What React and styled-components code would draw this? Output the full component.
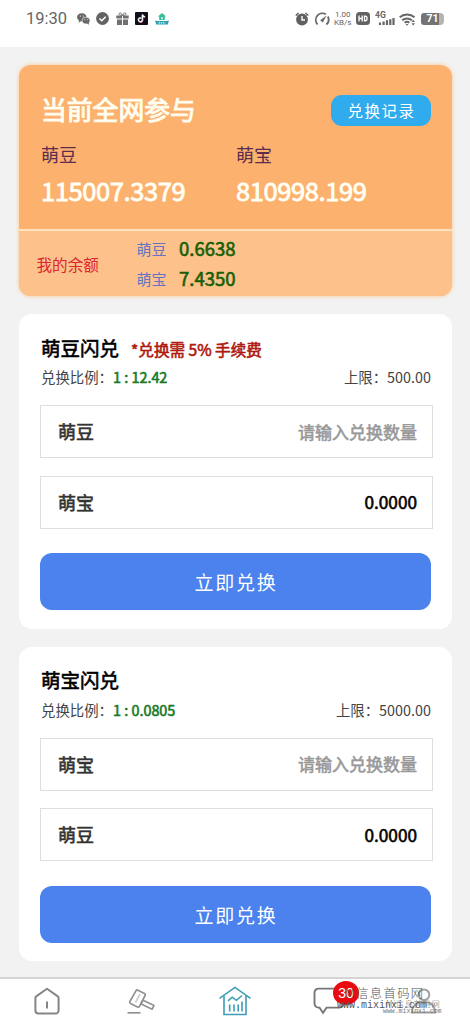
import React from 'react';
import styled, { createGlobalStyle, css } from 'styled-components';

// Content declarations:
const totals = [
  { id: 0, name: '萌豆', value: '115007.3379' },
  { id: 1, name: '萌宝', value: '810998.199' },
];

const balances = [
  { id: 0, name: '萌豆', value: '0.6638' },
  { id: 1, name: '萌宝', value: '7.4350' },
];

const exchanges = [
  {
    id: 0,
    title: '萌豆闪兑',
    note: '*兑换需 5% 手续费',
    ratio: '1 : 12.42',
    limit: '500.00',
    from: '萌豆',
    to: '萌宝',
  },
  {
    id: 1,
    title: '萌宝闪兑',
    note: '',
    ratio: '1 : 0.0805',
    limit: '5000.00',
    from: '萌宝',
    to: '萌豆',
  },
];

const GlobalStyle = createGlobalStyle`
  * {
    box-sizing: border-box;
  }
  body {
    margin: 0;
    background: #f2f2f2;
    font-family: 'Noto Sans CJK SC', sans-serif;
  }
`;

// Thickens the regular weight without changing its widths
const semiBold = css`
  -webkit-text-stroke: ${props => props.$stroke || 0.6}px currentColor;
`;

const Page = styled.div`
  width: 470px;
  height: 1024px;
  display: flex;
  flex-direction: column;
  overflow: hidden;
  background: #f2f2f2;
`;

const StatusBar = styled.header`
  flex: none;
  height: 47px;
  padding: 0 26px 10px;
  display: flex;
  align-items: center;
  justify-content: space-between;
  background: #fff;
  color: #666;
`;

const StatusGroup = styled.div`
  display: flex;
  align-items: center;
  gap: ${props => props.$gap}px;

  svg {
    display: block;
  }
`;

const Clock = styled.span`
  width: 44px;
  font: 16.5px/20px Roboto, sans-serif;
  white-space: nowrap;
`;

const Speed = styled.span`
  display: flex;
  flex-direction: column;
  align-items: center;
  font: 8px/8px Roboto, sans-serif;
  width: 17px;
  white-space: nowrap;
`;

const Battery = styled.span`
  width: 23px;
  height: 12px;
  border-radius: 3px 4px 4px 3px;
  background: linear-gradient(90deg, #747474 78%, #b4b4b4 78%);
  color: #fff;
  font: bold 10.5px/12.5px Roboto, sans-serif;
  text-align: center;
`;

const Content = styled.main`
  flex: 1;
  min-height: 0;
  padding: 18px 18px 0 19px;
  display: flex;
  flex-direction: column;
  gap: 18px;
`;

const Summary = styled.section`
  flex: none;
  height: 231px;
  border-radius: 12px;
  overflow: hidden;
  background: #fcb16e;
  box-shadow: 0 0 4px #fbc58c;
  display: flex;
  flex-direction: column;
`;

const SummaryTop = styled.div`
  height: 164px;
  padding: 29px 21px 0 22px;
`;

const SummaryHead = styled.div`
  height: 32px;
  display: flex;
  justify-content: space-between;
`;

const SummaryTitle = styled.h1`
  ${semiBold}
  margin: 0;
  font-size: 25.8px;
  line-height: 29px;
  font-weight: 400;
  color: #fffef0;
`;

const RecordButton = styled.button`
  width: 100px;
  height: 31px;
  margin-top: 1px;
  border: 0;
  padding: 0 0 0 1px;
  border-radius: 11px;
  background: #30abed;
  color: #fff;
  font: 15.5px/31px 'Noto Sans CJK SC', sans-serif;
  letter-spacing: 1.5px;
`;

const Totals = styled.div`
  display: flex;
`;

const Total = styled.div`
  width: 195px;
`;

const TotalName = styled.div`
  margin-top: 16px;
  font-size: 18px;
  line-height: 24px;
  color: #5b2c50;
`;

const TotalValue = styled.div`
  ${semiBold}
  margin-top: 6px;
  font-size: 25.5px;
  line-height: 36px;
  letter-spacing: -0.4px;
  color: #fffff5;
`;

const SummaryBottom = styled.div`
  flex: 1;
  padding: 0 0 1px 17.5px;
  border-top: 2px solid #fde3bd;
  background: #fdc28b;
  display: flex;
  align-items: center;
`;

const BalanceLabel = styled.div`
  width: 100px;
  padding-top: 1px;
  font-size: 15.6px;
  color: #dc2530;
`;

const BalanceList = styled.div`
  display: flex;
  flex-direction: column;
`;

const BalanceRow = styled.div`
  height: 30px;
  display: flex;
  align-items: center;
`;

const BalanceName = styled.span`
  width: 42.5px;
  padding-top: 1px;
  font-size: 15px;
  color: #6374c3;
`;

const BalanceValue = styled.span`
  ${semiBold}
  padding-bottom: 1px;
  font-size: 18.5px;
  color: #175f05;
`;

const Panel = styled.section`
  flex: none;
  height: 314.5px;
  padding: 19.5px 21px 0 22px;
  border-radius: 13px;
  background: #fff;
  display: flex;
  flex-direction: column;
`;

const PanelHead = styled.div`
  height: 28px;
  display: flex;
  align-items: center;
`;

const PanelTitle = styled.h2`
  ${semiBold}
  margin: 0;
  width: 90px;
  font-size: 19.5px;
  line-height: 28px;
  font-weight: 400;
  color: #000;
`;

const PanelNote = styled.span`
  ${semiBold}
  padding-top: 2px;
  font-size: 15.6px;
  line-height: 24px;
  color: #b01a10;
`;

const PanelMeta = styled.div`
  height: 30px;
  display: flex;
  align-items: center;
  justify-content: space-between;
  font-size: 14.4px;
  color: #444;
`;

const Ratio = styled.span`
  ${semiBold}
  color: #197a25;
`;

const Field = styled.div`
  width: 393px;
  height: 53px;
  margin: ${props => (props.$spaced ? 17.5 : 13.5)}px 0 0 -1px;
  padding: 0 15px 1px 17px;
  border: 1px solid #dedede;
  display: flex;
  align-items: center;
  justify-content: space-between;
`;

const FieldName = styled.span`
  ${semiBold}
  font-size: 18px;
  color: #333;
`;

const FieldHint = styled.span`
  ${semiBold}
  font-size: 17px;
  color: #999;
`;

const FieldValue = styled.span`
  ${semiBold}
  font-size: 17.2px;
  color: #000;
`;

const SubmitButton = styled.button`
  width: 391px;
  height: 57px;
  margin: 24.5px 0 0 -1px;
  padding: 0 0 0 1px;
  border: 0;
  border-radius: 12px;
  background: #4b82ed;
  color: #fff;
  font: 19px/58px 'Noto Sans CJK SC', sans-serif;
  letter-spacing: 1.7px;
`;

const TabBar = styled.nav`
  position: relative;
  flex: none;
  height: 47px;
  border-top: 2px solid #d4d4d4;
  background: #fff;
  display: flex;
  overflow: hidden;
`;

const Tab = styled.div`
  flex: 1;
  padding-top: 7px;
  display: flex;
  flex-direction: column;
  align-items: center;
  font-size: 12.5px;
  line-height: 18px;
  color: ${props => (props.$active ? '#3c9fb5' : '#777')};

  svg {
    flex: none;
    display: block;
    margin-bottom: 5px;
  }
`;

const Badge = styled.span`
  position: absolute;
  left: 333px;
  top: 2px;
  width: 26px;
  height: 24px;
  border-radius: 50%;
  background: #e90b12;
  color: #fff;
  font: 14px/24px 'Liberation Sans', sans-serif;
  text-align: center;
`;

const Stamp = styled.div`
  position: absolute;
  left: ${props => props.$left}px;
  top: ${props => props.$top}px;
  font: ${props => props.$size}px/1 ${props => (props.$mono ? "'Liberation Mono', monospace" : "'Noto Sans CJK SC', sans-serif")};
  font-weight: ${props => (props.$mono ? 400 : 300)};
  letter-spacing: ${props => props.$spacing || 0}px;
  color: ${props => props.$color || '#555'};
  white-space: nowrap;
`;

// Status bar icons
const WechatIcon = () => (
  <svg width="13" height="12" viewBox="0 0 13 12">
    <ellipse cx="4.8" cy="4.2" rx="4.7" ry="4" fill="#666" />
    <path d="M2 7 1.6 9.5 4.5 8z" fill="#666" />
    <ellipse cx="9" cy="7.6" rx="4" ry="3.4" fill="#666" stroke="#fff" strokeWidth=".6" />
    <path d="M10 10.4l2 1.4-.3-2.5z" fill="#666" />
    <g fill="#fff">
      <circle cx="3.3" cy="3.1" r=".6" />
      <circle cx="6.2" cy="3.1" r=".6" />
      <circle cx="7.8" cy="6.8" r=".5" />
      <circle cx="10.3" cy="6.8" r=".5" />
    </g>
  </svg>
);

const CheckIcon = () => (
  <svg width="13" height="13" viewBox="0 0 13 13">
    <circle cx="6.5" cy="6.5" r="6.4" fill="#636363" />
    <path d="M3.5 6.5l2.3 2.3 3.9-4" fill="none" stroke="#fff" strokeWidth="1.5" />
  </svg>
);

const GiftIcon = () => (
  <svg width="13" height="13" viewBox="0 0 13 13">
    <path d="M.3 3.5h5.7v3H.3zM7 3.5h5.7v3H7zM1 7.5h5V13H1zM7 7.5h5V13H7z" fill="#707070" />
    <path d="M6.5 3.4C5.4.2 2.5.3 3.2 2.5c.2.6 1.3.9 3.3.9C8.5 3.4 9.6 3.1 9.8 2.5 10.5.3 7.6.2 6.5 3.4z" fill="none" stroke="#707070" />
  </svg>
);

const TiktokIcon = () => (
  <svg width="13" height="13" viewBox="0 0 13 13">
    <rect width="13" height="13" rx="1" fill="#130d18" />
    <path d="M6.4 6.1a2 2 0 1 0 1.1 1.9V2.6c.3 1.4 1.2 2.2 2.6 2.3" fill="none" stroke="#e04963" strokeWidth="1.3" transform="translate(.4 .3)" />
    <path d="M6.2 6a2 2 0 1 0 1.1 1.9V2.5c.3 1.4 1.2 2.2 2.6 2.3" fill="none" stroke="#e8ffff" strokeWidth="1.3" />
  </svg>
);

const HouseIcon = () => (
  <svg width="14" height="13" viewBox="0 0 14 13">
    <path d="M7 1l4.1 3.6H9.8V8H4.2V4.6H2.9z" fill="#35bd9b" />
    <path d="M6.2 5h1.6v2.5H6.2z" fill="#c5f2e6" />
    <path d="M0 8.4l2.5.6h9l2.5-.6-1.3 4.1H1.3z" fill="#2b9fb0" />
    <path d="M3.5 10.8h7" stroke="#d8f5f3" strokeWidth="1.2" strokeDasharray="1.5 .7" />
  </svg>
);

const AlarmIcon = () => (
  <svg width="14" height="14" viewBox="0 0 14 14">
    <circle cx="7" cy="7.5" r="5.9" fill="#606060" />
    <path d="M.7 3.6L3.6 1M13.3 3.6L10.4 1" stroke="#606060" strokeWidth="1.4" />
    <path d="M7 4v4h3" fill="none" stroke="#fff" strokeWidth="1.4" />
  </svg>
);

const GaugeIcon = () => (
  <svg width="16" height="14" viewBox="0 0 16 14">
    <path d="M3.6 12.5A6.6 6.6 0 0 1 11.8 2.3M13.8 4.5a6.6 6.6 0 0 1-1.4 8" fill="none" stroke="#666" strokeWidth="1.8" />
    <path d="M12.5 3.5L8.8 10.4 6.2 8.2z" fill="#666" />
  </svg>
);

const HdIcon = () => (
  <svg width="14" height="13" viewBox="0 0 14 13">
    <rect width="14" height="13" rx="3.5" fill="#626262" />
    <path d="M3 3.6v5.8M6.2 3.6v5.8M3 6.5h3.2M8.5 4.2v4.6h.7c2.5 0 2.5-4.6 0-4.6z" fill="none" stroke="#fff" strokeWidth="1.3" />
  </svg>
);

const SignalIcon = () => (
  <svg width="20" height="15" viewBox="0 0 20 15">
    <text x="0" y="6.8" fontFamily="Roboto, sans-serif" fontWeight="700" fontSize="8.5" fill="#666">4G</text>
    <path d="M5 11.5V14M8.6 10.5V14M12 9.2V14M15.3 8.2V14M18.5 7V14" stroke="#666" strokeWidth="2.2" />
  </svg>
);

const WifiIcon = () => (
  <svg width="17" height="14" viewBox="0 0 17 14">
    <path d="M.7 5.3a11.2 11.2 0 0 1 14.8 0M3.2 8.3a7.3 7.3 0 0 1 9.6-.1M5.6 10.8a3.8 3.8 0 0 1 4.8 0" fill="none" stroke="#666" strokeWidth="1.9" />
    <path d="M6.5 12l1.5 1.7L9.5 12z" fill="#666" />
    <path d="M12.4 10l1.8-2.2L16 10zM12.4 11.2l1.8 2.2 1.8-2.2z" fill="#666" />
  </svg>
);

// Tab icons
const HomeIcon = () => (
  <svg width="28" height="30" viewBox="0 0 28 30" fill="none" stroke="#858585" strokeWidth="2" strokeLinejoin="round">
    <path d="M14 2.8L3.2 10.4a2 2 0 0 0-.8 1.6v12.5a3 3 0 0 0 3 3h17.2a3 3 0 0 0 3-3V12a2 2 0 0 0-.8-1.6z" />
    <path d="M14 15.5v7" />
  </svg>
);

const GavelIcon = () => (
  <svg width="28" height="30" viewBox="0 0 28 30" fill="none" stroke="#929292" strokeWidth="1.7" strokeLinejoin="round">
    <path d="M10.8 4.2l6.7 3.4q1.2.7.6 1.9l-5.7 10.9q-.7 1.2-1.9.6l-7-3.6q-1.2-.7-.6-1.9L8.900 4.800q.7-1.2 1.9-.6z" />
    <path d="M13 8L8.5 16.5" stroke="#d0d0d0" />
    <path d="M16 14.2l11 5.2-1.8 3.8-11-5.2z" />
    <path d="M.5 26.8h13" />
  </svg>
);

const ChartHouseIcon = () => (
  <svg width="34" height="30" viewBox="0 0 34 30" fill="none" stroke="#3d9db8" strokeWidth="1.6">
    <path d="M1.5 12.3L17 1.4l15.5 10.9" />
    <path d="M6 10v18.5h22V10" />
    <path d="M10 14.8l4.2-3.6 4.2 3.1 5.6-4.8" />
    <path d="M11.7 18.5v7M16 18.5v7M20.2 18.5v7M24 15.5v10" />
  </svg>
);

const ChatIcon = () => (
  <svg width="32" height="30" viewBox="0 0 32 30" fill="none" stroke="#777" strokeWidth="1.9">
    <path d="M5.5 2.6h21a4 4 0 0 1 4 4v11a4 4 0 0 1-4 4H13.5L10 26.7l-3.5-5.1h-1a4 4 0 0 1-4-4v-11a4 4 0 0 1 4-4z" />
  </svg>
);

const UserIcon = () => (
  <svg width="28" height="30" viewBox="0 0 28 30" fill="none" stroke="#a0a0a0" strokeWidth="2">
    <circle cx="15" cy="8.8" r="5.3" />
    <path d="M3 26.5c0-6.5 4.5-10.5 12-10.5s11 4 11 10.5z" />
  </svg>
);

const tabs = [
  { id: 0, name: '首页', icon: <HomeIcon /> },
  { id: 1, name: '评价', icon: <GavelIcon /> },
  { id: 2, name: '实验池', icon: <ChartHouseIcon />, active: true },
  { id: 3, name: '通讯', icon: <ChatIcon /> },
  { id: 4, name: '我的', icon: <UserIcon /> },
];

function Exchange({ item }) {
  return (
    <Panel>
      <PanelHead>
        <PanelTitle>{item.title}</PanelTitle>
        {item.note && <PanelNote>{item.note}</PanelNote>}
      </PanelHead>
      <PanelMeta>
        <span>
          兑换比例：<Ratio>{item.ratio}</Ratio>
        </span>
        <span>上限：{item.limit}</span>
      </PanelMeta>
      <Field>
        <FieldName>{item.from}</FieldName>
        <FieldHint>请输入兑换数量</FieldHint>
      </Field>
      <Field $spaced>
        <FieldName>{item.to}</FieldName>
        <FieldValue>0.0000</FieldValue>
      </Field>
      <SubmitButton>立即兑换</SubmitButton>
    </Panel>
  );
}

function App() {
  return (
    <Page>
      <GlobalStyle />
      <StatusBar>
        <StatusGroup $gap={6.6}>
          <Clock>19:30</Clock>
          <WechatIcon />
          <CheckIcon />
          <GiftIcon />
          <TiktokIcon />
          <HouseIcon />
        </StatusGroup>
        <StatusGroup $gap={4.7}>
          <AlarmIcon />
          <GaugeIcon />
          <Speed>
            <span>1.00</span>
            <span>KB/s</span>
          </Speed>
          <HdIcon />
          <SignalIcon />
          <WifiIcon />
          <Battery>71</Battery>
        </StatusGroup>
      </StatusBar>

      <Content>
        <Summary>
          <SummaryTop>
            <SummaryHead>
              <SummaryTitle $stroke={0.9}>当前全网参与</SummaryTitle>
              <RecordButton>兑换记录</RecordButton>
            </SummaryHead>
            <Totals>
              {totals.map(item => (
                <Total key={item.id}>
                  <TotalName>{item.name}</TotalName>
                  <TotalValue $stroke={0.8}>{item.value}</TotalValue>
                </Total>
              ))}
            </Totals>
          </SummaryTop>
          <SummaryBottom>
            <BalanceLabel>我的余额</BalanceLabel>
            <BalanceList>
              {balances.map(item => (
                <BalanceRow key={item.id}>
                  <BalanceName>{item.name}</BalanceName>
                  <BalanceValue>{item.value}</BalanceValue>
                </BalanceRow>
              ))}
            </BalanceList>
          </SummaryBottom>
        </Summary>

        {exchanges.map(item => (
          <Exchange item={item} key={item.id} />
        ))}
      </Content>

      <TabBar>
        {tabs.map(tab => (
          <Tab key={tab.id} $active={tab.active}>
            {tab.icon}
            {tab.name}
          </Tab>
        ))}
        <Badge>30</Badge>
        <Stamp $left={345} $top={8} $size={12.3} $spacing={1.4}>
          M信息首码网
        </Stamp>
        <Stamp $left={337} $top={22} $size={10} $mono>
          www.mixinxi.com
        </Stamp>
        <Stamp $left={386} $top={20} $size={8.3} $spacing={0.6} $color="#777">
          Mi信息首码网
        </Stamp>
        <Stamp $left={383} $top={30} $size={6.5} $mono $color="#777">
          www.mixinxi.com
        </Stamp>
      </TabBar>
    </Page>
  );
}

export default App;
